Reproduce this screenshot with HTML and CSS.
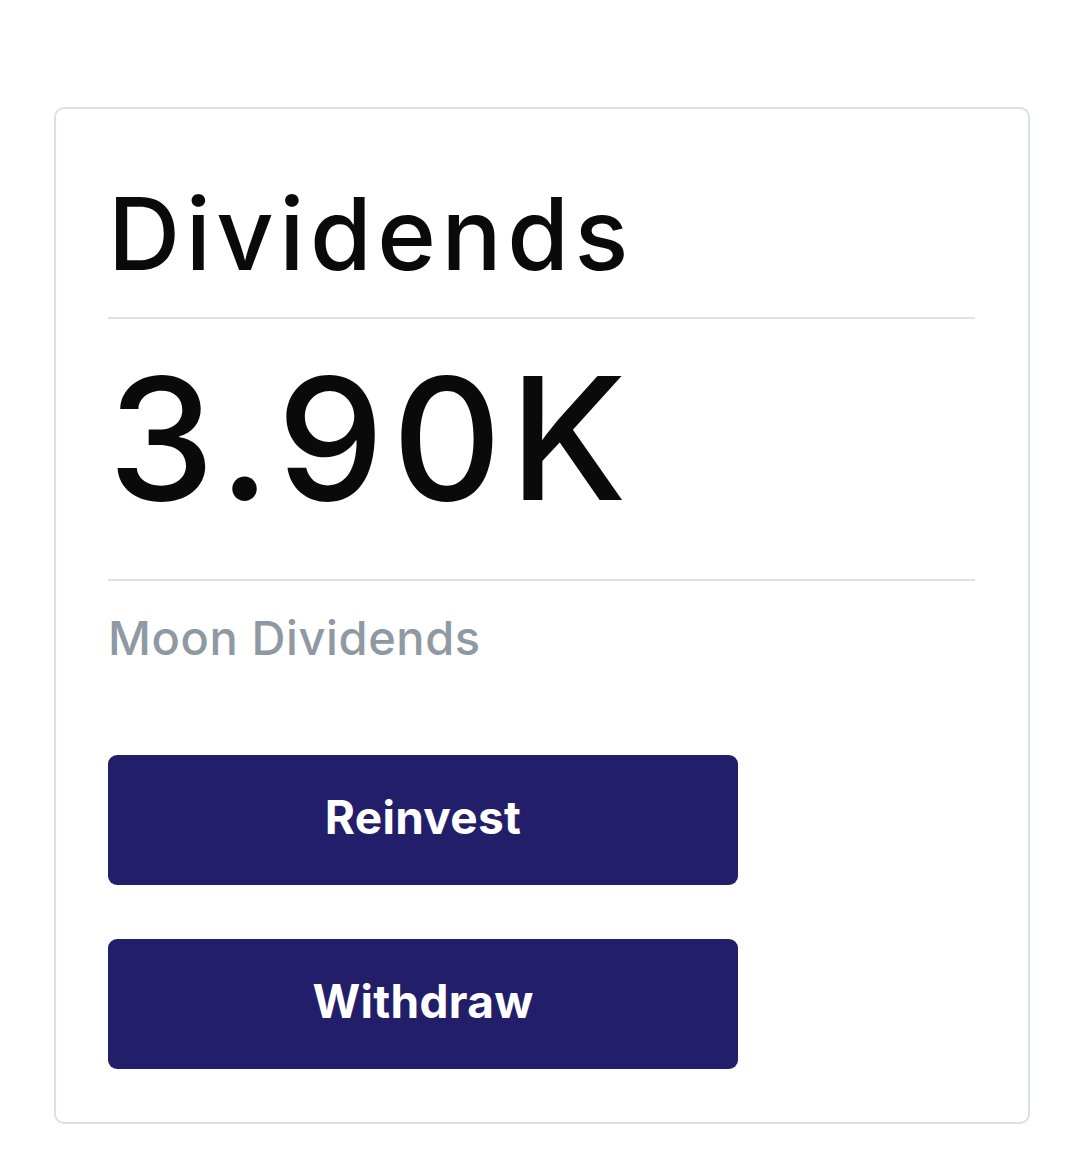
FILE: index.html
```html
<!DOCTYPE html>
<html>
<head>
<meta charset="utf-8">
<link rel="stylesheet" href="styles.css">
</head>
<body>
<div class="page">
  <section class="card">
    <h1 class="title">Dividends</h1>
    <hr class="divider divider-top">
    <div class="amount">3.90K</div>
    <hr class="divider divider-bottom">
    <div class="label">Moon Dividends</div>
    <div class="actions">
      <button class="btn">Reinvest</button>
      <button class="btn">Withdraw</button>
    </div>
  </section>
</div>
</body>
</html>
```

FILE: styles.css
```css
html, body {
  margin: 0;
  padding: 0;
  background: #ffffff;
}
body {
  font-family: Inter, "Noto Sans", sans-serif;
  color: #0a0a0a;
}
.page {
  padding: 107px 50px 0 54px;
}
.card {
  border: 2px solid #dbe0e2;
  border-radius: 10px;
  padding: 52px 53px 52px 52px;
  height: 1017px;
  box-sizing: border-box;
}
.title {
  margin: 23px 0 0 0;
  font-size: 100px;
  line-height: 100px;
  font-weight: 500;
  letter-spacing: 5.5px;
}
.divider {
  border: 0;
  height: 2px;
  background: #dde3e5;
  margin: 0;
}
.divider-top {
  margin-top: 33px;
}
.amount {
  margin-top: 34px;
  font-size: 170px;
  line-height: 170px;
  font-weight: 500;
  letter-spacing: 8px;
}
.divider-bottom {
  margin-top: 56px;
}
.label {
  margin-top: 33px;
  font-size: 47px;
  line-height: 47px;
  font-weight: 500;
  color: #8e99a3;
  letter-spacing: 0.6px;
}
.actions {
  margin-top: 94px;
  display: flex;
  flex-direction: column;
  gap: 54px;
}
.btn {
  width: 630px;
  height: 130px;
  border: 0;
  border-radius: 9px;
  background: #231e6a;
  color: #ffffff;
  font-family: Inter, "Noto Sans", sans-serif;
  font-size: 46px;
  font-weight: 700;
  letter-spacing: 0.3px;
  padding: 0 0 6px 0;
  display: flex;
  align-items: center;
  justify-content: center;
}
```
